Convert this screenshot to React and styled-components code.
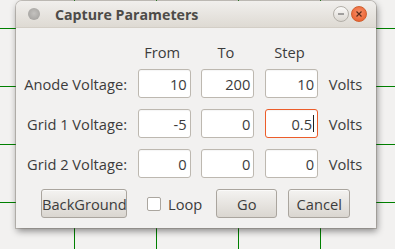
import React from "react";
import styled, { createGlobalStyle } from "styled-components";

const GlobalStyle = createGlobalStyle`
  html, body { margin: 0; padding: 0; }
  body { background: #f2f1f0; font-family: "Open Sans", "DejaVu Sans", sans-serif; }
`;

const FS = "14.67px";

const Stage = styled.div`
  position: relative;
  width: 395px;
  height: 249px;
  overflow: hidden;
  background: #f2f1f0;
`;

const Grid = styled.svg`
  position: absolute;
  inset: 0;
`;

const Dialog = styled.div`
  position: absolute;
  left: 16px;
  top: 1px;
  width: 360px;
  height: 227px;
  box-sizing: border-box;
  display: flex;
  flex-direction: column;
  background: #f2f1f0;
  border-radius: 6px 6px 0 0;
  box-shadow: 0 0 0 1px rgba(120, 112, 100, 0.35), 1px 3px 7px rgba(0, 0, 0, 0.45);
`;

const TitleBar = styled.div`
  height: 27px;
  flex: none;
  display: flex;
  align-items: center;
  border-radius: 6px 6px 0 0;
  background: linear-gradient(#f1efed, #dedad3);
  border-bottom: 1px solid #d3cec6;
  box-sizing: border-box;
  padding: 0 0 0 12px;
`;

const MenuDot = styled.div`
  width: 12px;
  height: 12px;
  border-radius: 50%;
  background: radial-gradient(circle at 50% 45%, #c4c2bf 0%, #a9a7a4 70%, #b8b6b3 100%);
  margin-right: 15px;
`;

const Title = styled.div`
  font-weight: 700;
  font-size: 14.2px;
  color: #4d4b48;
  flex: 1;
`;

const WinButtons = styled.div`
  display: flex;
  align-items: center;
  gap: 2px;
  margin-right: 9px;
`;

const WinBtn = styled.div`
  width: 16px;
  height: 16px;
  border-radius: 50%;
  box-sizing: border-box;
  display: flex;
  align-items: center;
  justify-content: center;
  border: 1px solid ${(p) => (p.$close ? "#d0602f" : "#b3afa8")};
  background: ${(p) =>
    p.$close
      ? "radial-gradient(circle at 50% 40%, #f7916a, #ec6535 75%)"
      : "linear-gradient(#fbfaf9, #dcd8d2)"};
`;

const Body = styled.div`
  flex: 1;
  display: flex;
  flex-direction: column;
  padding-top: 15px;
`;

const Form = styled.div`
  display: grid;
  grid-template-columns: 111px 53px 53px 53px 1fr;
  column-gap: 10.7px;
  row-gap: 11px;
  align-items: center;
`;

const Header = styled.div`
  grid-column: ${(p) => p.$col};
  text-align: center;
  padding-right: 4px;
  font-size: ${FS};
  color: #3c3c3c;
  height: 18px;
  line-height: 18px;
  margin-bottom: -3px;
`;

const Label = styled.div`
  grid-column: 1;
  text-align: right;
  font-size: ${FS};
  color: #3c3c3c;
`;

const Unit = styled.div`
  font-size: ${FS};
  color: #3c3c3c;
`;

const Entry = styled.div`
  height: 29px;
  box-sizing: border-box;
  border: 1px solid ${(p) => (p.$focused ? "#ec5d2a" : "#bdb8b0")};
  border-radius: 3px;
  background: #fff;
  display: flex;
  align-items: center;
  justify-content: flex-end;
  padding-right: 3px;
  font-size: ${FS};
  color: #3c3c3c;
  box-shadow: inset 0 1px 1px rgba(0, 0, 0, 0.04);
`;

const Caret = styled.span`
  display: inline-block;
  width: 1px;
  height: 17px;
  background: #222;
  margin-left: 1px;
`;

const Actions = styled.div`
  display: flex;
  align-items: center;
  padding-left: 25px;
  margin-top: 11px;
`;

const Button = styled.button`
  width: ${(p) => p.$w}px;
  height: 29px;
  margin-right: ${(p) => p.$mr || 0}px;
  box-sizing: border-box;
  border: 1px solid #aaa59e;
  border-radius: 3px;
  background: linear-gradient(#f4f3f1, #dad6d0);
  font-family: inherit;
  font-size: ${FS};
  color: #3c3c3c;
  padding: 0;
  box-shadow: inset 0 1px 0 rgba(255, 255, 255, 0.6);
`;

const Check = styled.label`
  display: flex;
  align-items: center;
  gap: 7px;
  font-size: ${FS};
  color: #3c3c3c;
  margin-right: 14px;
`;

const Box = styled.span`
  width: 14px;
  height: 14px;
  box-sizing: border-box;
  border: 1px solid #aba69f;
  border-radius: 2px;
  background: #fff;
`;

const rows = [
  { label: "Anode Voltage:", values: ["10", "200", "10"] },
  { label: "Grid 1 Voltage:", values: ["-5", "0", "0.5"], focus: 2 },
  { label: "Grid 2 Voltage:", values: ["0", "0", "0"] },
];

export default function App() {
  const vx = [74, 156, 238, 320];
  const hy = [28, 86, 144, 202];
  return (
    <>
      <GlobalStyle />
      <Stage>
        <Grid width="395" height="249">
          {vx.map((x) => (
            <line key={x} x1={x + 0.5} y1="0" x2={x + 0.5} y2="249" stroke="#008000" strokeWidth="1" />
          ))}
          {hy.map((y) => (
            <line key={y} x1="0" y1={y + 0.5} x2="395" y2={y + 0.5} stroke="#008000" strokeWidth="1" />
          ))}
        </Grid>
        <Dialog>
          <TitleBar>
            <MenuDot />
            <Title>Capture Parameters</Title>
            <WinButtons>
              <WinBtn>
                <svg width="8" height="8" viewBox="0 0 8 8">
                  <line x1="1" y1="4" x2="7" y2="4" stroke="#555" strokeWidth="1" />
                </svg>
              </WinBtn>
              <WinBtn $close>
                <svg width="8" height="8" viewBox="0 0 8 8">
                  <path d="M1.5 1.5 L6.5 6.5 M6.5 1.5 L1.5 6.5" stroke="#5a2a18" strokeWidth="1.2" />
                </svg>
              </WinBtn>
            </WinButtons>
          </TitleBar>
          <Body>
            <Form>
              <Header $col={2}>From</Header>
              <Header $col={3}>To</Header>
              <Header $col={4}>Step</Header>
              {rows.map((r) => (
                <React.Fragment key={r.label}>
                  <Label>{r.label}</Label>
                  {r.values.map((v, i) => (
                    <Entry key={i} $focused={r.focus === i}>
                      <span>{v}</span>
                      {r.focus === i && <Caret />}
                    </Entry>
                  ))}
                  <Unit>Volts</Unit>
                </React.Fragment>
              ))}
            </Form>
            <Actions>
              <Button $w={86} $mr={20}>BackGround</Button>
              <Check>
                <Box />
                Loop
              </Check>
              <Button $w={61} $mr={11}>Go</Button>
              <Button $w={62}>Cancel</Button>
            </Actions>
          </Body>
        </Dialog>
      </Stage>
    </>
  );
}
